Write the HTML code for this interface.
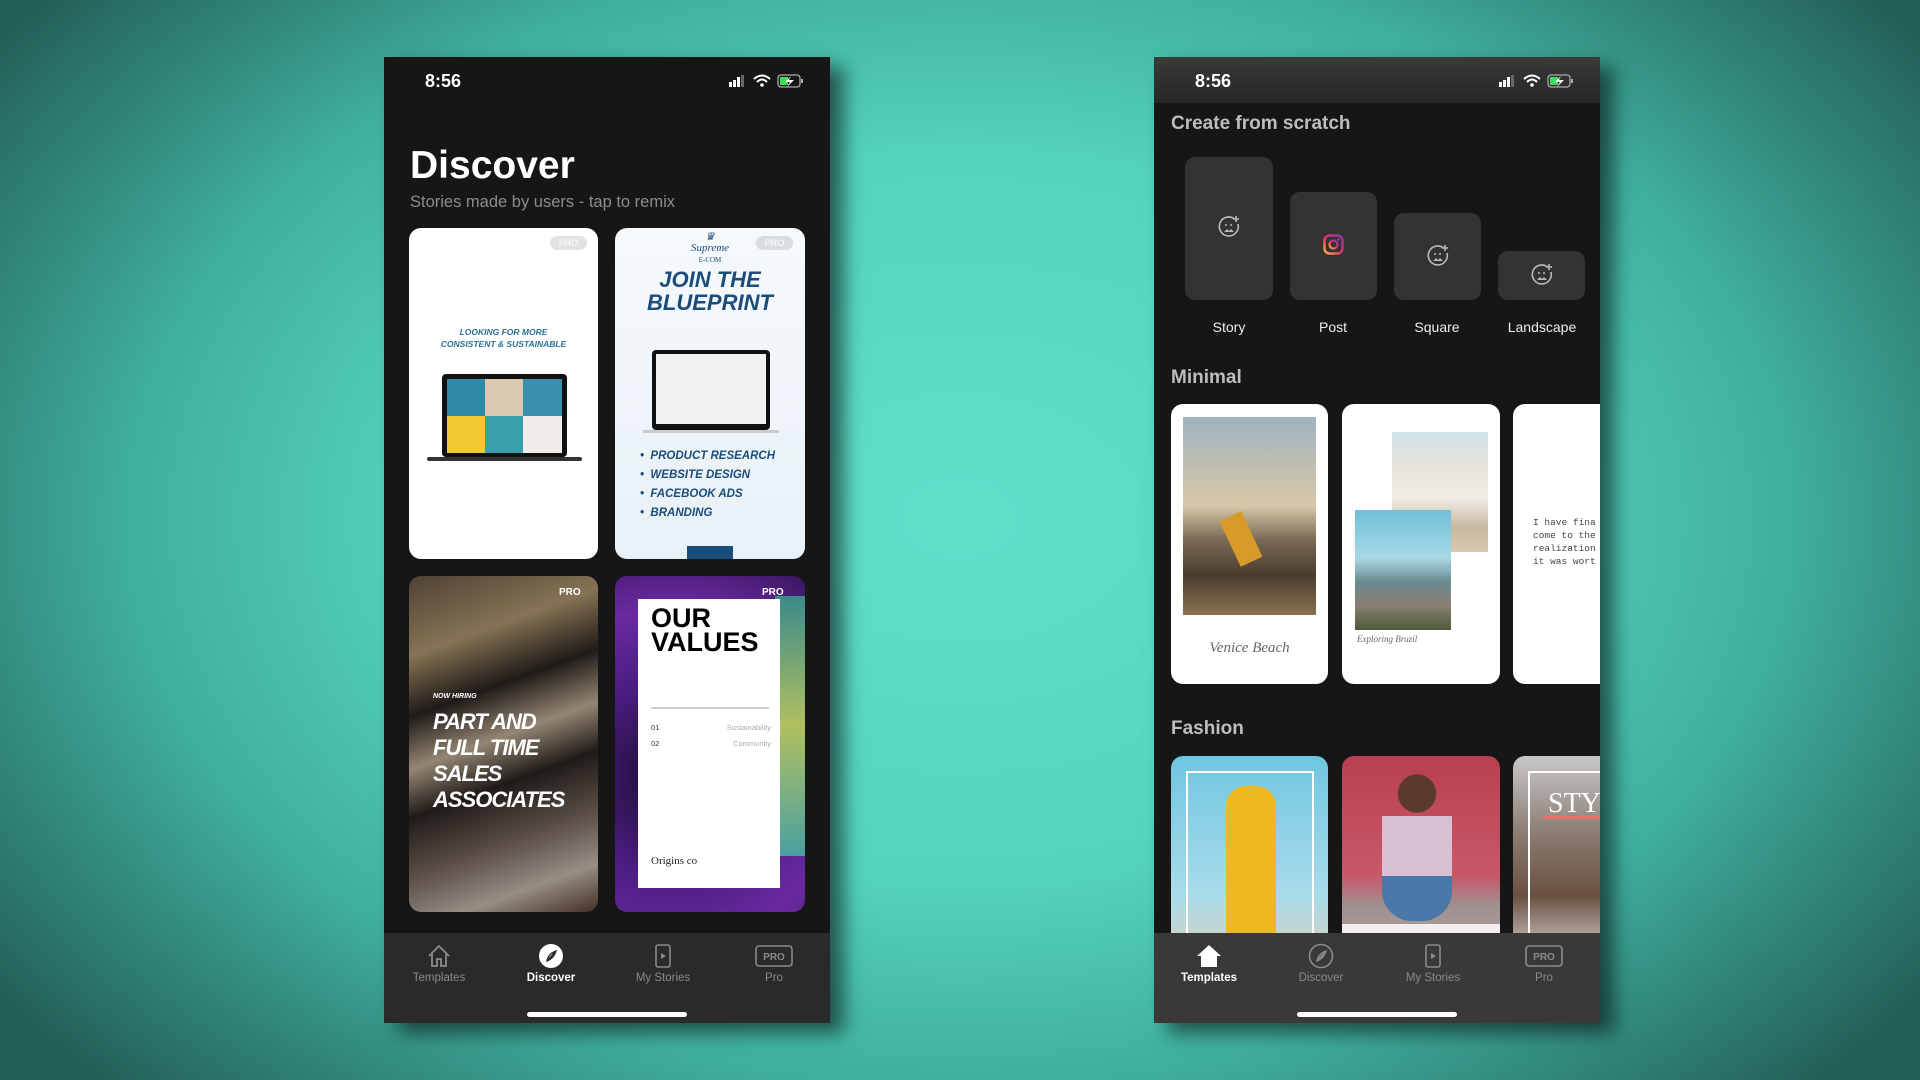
<!DOCTYPE html>
<html><head><meta charset="utf-8">
<style>
*{margin:0;padding:0;box-sizing:border-box}
body{width:1920px;height:1080px;overflow:hidden;position:relative;font-family:"Liberation Sans",sans-serif;
background:radial-gradient(ellipse 62% 75% at 50% 48%,#5fe0cb 0%,#54d3bd 45%,#3fae9c 70%,#235f57 100%);}
.ph{position:absolute;top:57px;width:446px;height:966px;background:#161616;overflow:hidden;box-shadow:14px 10px 18px rgba(0,0,0,.55)}
.abs{position:absolute}
.time{position:absolute;left:41px;top:14px;font-size:18px;font-weight:bold;color:#fff}
.card{position:absolute;border-radius:12px;overflow:hidden}
.tabbar{position:absolute;left:0;top:876px;width:446px;height:90px}
.tab{position:absolute;top:0;width:100px;margin-left:-50px;text-align:center;font-size:11.5px;color:#8a8a8a}
.tab svg{display:block;margin:10px auto 3px}
.hi{position:absolute;top:955px;left:143px;width:160px;height:5px;border-radius:3px;background:#fff}
.bb{font-style:italic;font-weight:900;color:#1a4c7c}
.sec{position:absolute;left:17px;font-size:19px;font-weight:bold;color:#bdbdbd}
.box{position:absolute;background:#333;border-radius:10px}
.lbl{position:absolute;top:262px;width:100px;margin-left:-50px;text-align:center;font-size:14px;color:#eee}
</style></head><body>

<!-- LEFT PHONE -->
<div class="ph" style="left:384px">
  <div class="time">8:56</div>
  <svg class="abs" style="left:343px;top:16px" width="80" height="16" viewBox="0 0 80 16">
    <rect x="2" y="9" width="3" height="5" fill="#fff"/><rect x="6" y="7" width="3" height="7" fill="#fff"/><rect x="10" y="4" width="3" height="10" fill="#fff"/><rect x="14" y="2" width="3" height="12" fill="#666"/>
    <path d="M27 6 Q35 -1 43 6" stroke="#fff" stroke-width="2" fill="none"/><path d="M30 9 Q35 4 40 9" stroke="#fff" stroke-width="2" fill="none"/><circle cx="35" cy="12" r="1.8" fill="#fff"/>
    <rect x="51" y="2" width="22" height="12" rx="3" stroke="#aaa" stroke-width="1.3" fill="none"/><rect x="53" y="4" width="8" height="8" fill="#3ddc5a"/><path d="M64 3 L58 9 L63 9 L60 14 L67 7 L62 7 Z" fill="#fff"/><rect x="74" y="6" width="2" height="4" fill="#aaa"/>
  </svg>
  <div class="abs" style="left:26px;top:87px;font-size:39px;font-weight:bold;color:#fff">Discover</div>
  <div class="abs" style="left:26px;top:136px;font-size:16.5px;color:#8c8c8c">Stories made by users - tap to remix</div>

  <!-- card1 -->
  <div class="card" style="left:25px;top:171px;width:189px;height:331px;background:#fff">
    <div class="abs" style="left:141px;top:8px;width:37px;height:14px;border-radius:7px;background:#e2e2e2;color:#fff;font-size:9px;text-align:center;line-height:14px">PRO</div>
    <div class="abs bb" style="left:0;width:189px;top:98px;text-align:center;font-size:8.5px;line-height:12px;color:#2a7196">LOOKING FOR MORE<br>CONSISTENT &amp; SUSTAINABLE</div>
    <div class="abs" style="left:33px;top:146px;width:125px;height:83px;background:#111;border-radius:4px"></div>
    <div class="abs" style="left:38px;top:151px;width:115px;height:74px;background:linear-gradient(90deg,#2e8aa8 0 33%,#d8c9b0 33% 66%,#3a8fae 66%)"></div>
    <div class="abs" style="left:38px;top:188px;width:115px;height:37px;background:linear-gradient(90deg,#f0c830 0 33%,#38a0a8 33% 66%,#f0ece8 66%)"></div>
    <div class="abs" style="left:18px;top:229px;width:155px;height:4px;background:#333;border-radius:2px"></div>
  </div>
  <!-- card2 -->
  <div class="card" style="left:231px;top:171px;width:190px;height:331px;background:linear-gradient(#f6f9fc,#e8f1f7)">
    <div class="abs" style="left:141px;top:8px;width:37px;height:14px;border-radius:7px;background:#d8dde0;color:#fff;font-size:9px;text-align:center;line-height:14px">PRO</div>
    <div class="abs" style="left:0;width:190px;top:4px;text-align:center;font-family:'Liberation Serif',serif;font-style:italic;font-size:11px;color:#1a4c7c;line-height:11px">♛<br>Supreme<br><span style="font-size:7px;font-style:normal">E-COM</span></div>
    <div class="abs bb" style="left:0;width:190px;top:40px;text-align:center;font-size:22px;line-height:23px">JOIN THE<br>BLUEPRINT</div>
    <div class="abs" style="left:37px;top:122px;width:118px;height:80px;background:#111;border-radius:4px"></div>
    <div class="abs" style="left:41px;top:126px;width:110px;height:70px;background:#f2f2f2"></div>
    <div class="abs" style="left:28px;top:202px;width:136px;height:3px;background:#ccc"></div>
    <div class="abs bb" style="left:25px;top:219px;font-size:11.5px;line-height:19px">• &nbsp;PRODUCT RESEARCH<br>• &nbsp;WEBSITE DESIGN<br>• &nbsp;FACEBOOK ADS<br>• &nbsp;BRANDING</div>
    <div class="abs" style="left:72px;top:318px;width:46px;height:13px;background:#1a4c7c"></div>
  </div>
  <!-- card3 -->
  <div class="card" style="left:25px;top:519px;width:189px;height:336px;background:linear-gradient(160deg,#6a5848 0%,#b39a70 20%,#2a2420 35%,#c6b39a 48%,#2b2420 60%,#7a6a60 75%,#c9bdb0 88%,#5a4030 100%)">
    <div class="abs" style="inset:0;background:rgba(0,0,0,.25)"></div>
    <div class="abs" style="left:150px;top:11px;color:#fff;font-size:10px;font-weight:bold">PRO</div>
    <div class="abs" style="left:24px;top:117px;color:#fff;font-size:7px;font-weight:bold;font-style:italic">NOW HIRING</div>
    <div class="abs" style="left:24px;top:133px;color:#fff;font-size:22px;font-weight:900;font-style:italic;line-height:26px;letter-spacing:-1px">PART AND<br>FULL TIME<br>SALES<br>ASSOCIATES</div>
  </div>
  <!-- card4 -->
  <div class="card" style="left:231px;top:519px;width:190px;height:336px;background:radial-gradient(circle at 30% 60%,#1a0a2a,#4a1d80 40%,#6a2aa0 70%,#3a1660)">
    <div class="abs" style="right:0;top:20px;width:30px;height:260px;background:linear-gradient(#3a8a8a,#b0c060,#4aa0a0)"></div>
    <div class="abs" style="left:23px;top:23px;width:142px;height:289px;background:#fff"></div>
    <div class="abs" style="left:147px;top:11px;color:#fff;font-size:10px;font-weight:bold">PRO</div>
    <div class="abs" style="left:36px;top:30px;color:#000;font-size:27px;font-weight:bold;line-height:24px">OUR<br>VALUES</div>
    <div class="abs" style="left:36px;top:131px;width:118px;height:2px;background:#ccc"></div>
    <div class="abs" style="left:36px;top:144px;width:120px;font-size:7.5px;color:#333;line-height:16px">01<span style="float:right;color:#aaa">Sustainability</span><br>02<span style="float:right;color:#aaa">Community</span></div>
    <div class="abs" style="left:36px;top:279px;font-family:'Liberation Serif',serif;font-size:11px;color:#222">Origins co</div>
  </div>

  <div class="tabbar" style="background:#2a2a2a">
    <div class="tab" style="left:55px"><svg width="26" height="26" viewBox="0 0 26 26"><path d="M3 13 L13 3 L23 13 M6 10 V23 H11 V16 H15 V23 H20 V10" stroke="#8a8a8a" stroke-width="1.8" fill="none"/></svg>Templates</div>
    <div class="tab" style="left:167px;color:#fff;font-weight:bold"><svg width="26" height="26" viewBox="0 0 26 26"><circle cx="13" cy="13" r="12" fill="#fff"/><path d="M18 8 Q16 15 9 18 Q10 11 18 8Z M9 18 L18 8" stroke="#2a2a2a" stroke-width="1.4" fill="none"/></svg>Discover</div>
    <div class="tab" style="left:279px"><svg width="26" height="26" viewBox="0 0 26 26"><rect x="6" y="2" width="14" height="22" rx="2" stroke="#8a8a8a" stroke-width="1.6" fill="none"/><path d="M11 10 L16 13 L11 16Z" fill="#8a8a8a"/></svg>My Stories</div>
    <div class="tab" style="left:390px"><svg width="40" height="26" viewBox="0 0 40 26"><rect x="2" y="3" width="36" height="20" rx="3" stroke="#8a8a8a" stroke-width="1.6" fill="none"/><text x="20" y="17" text-anchor="middle" font-size="10" font-weight="bold" fill="#8a8a8a" font-family="Liberation Sans">PRO</text></svg>Pro</div>
  </div>
  <div class="hi"></div>
</div>

<!-- RIGHT PHONE -->
<div class="ph" style="left:1154px">
  <div class="abs" style="left:0;top:0;width:446px;height:46px;background:linear-gradient(#3a3a3a,#262626)"></div>
  <div class="time">8:56</div>
  <svg class="abs" style="left:343px;top:16px" width="80" height="16" viewBox="0 0 80 16">
    <rect x="2" y="9" width="3" height="5" fill="#fff"/><rect x="6" y="7" width="3" height="7" fill="#fff"/><rect x="10" y="4" width="3" height="10" fill="#fff"/><rect x="14" y="2" width="3" height="12" fill="#666"/>
    <path d="M27 6 Q35 -1 43 6" stroke="#fff" stroke-width="2" fill="none"/><path d="M30 9 Q35 4 40 9" stroke="#fff" stroke-width="2" fill="none"/><circle cx="35" cy="12" r="1.8" fill="#fff"/>
    <rect x="51" y="2" width="22" height="12" rx="3" stroke="#aaa" stroke-width="1.3" fill="none"/><rect x="53" y="4" width="8" height="8" fill="#3ddc5a"/><path d="M64 3 L58 9 L63 9 L60 14 L67 7 L62 7 Z" fill="#fff"/><rect x="74" y="6" width="2" height="4" fill="#aaa"/>
  </svg>
  <div class="sec" style="top:56px">Create from scratch</div>
  <div class="box" style="left:31px;top:100px;width:88px;height:143px"></div>
  <div class="box" style="left:136px;top:135px;width:87px;height:108px"></div>
  <div class="box" style="left:240px;top:156px;width:87px;height:87px"></div>
  <div class="box" style="left:344px;top:194px;width:87px;height:49px"></div>
  <svg class="abs" style="left:63px;top:158px" width="24" height="24" viewBox="0 0 24 24"><path d="M17 3.5 A9.5 9.5 0 1 0 21 9" stroke="#bbb" stroke-width="1.6" fill="none"/><path d="M19 1 V7 M16 4 H22" stroke="#bbb" stroke-width="1.6"/><circle cx="9" cy="10" r="1" fill="#bbb"/><circle cx="14" cy="10" r="1" fill="#bbb"/><path d="M7 17 L10 14 L12 16 L14 14 L17 17Z" fill="#bbb"/></svg>
  <svg class="abs" style="left:169px;top:177px" width="21" height="21" viewBox="0 0 21 21"><defs><linearGradient id="ig" x1="0" y1="1" x2="1" y2="0"><stop offset="0" stop-color="#fdb045"/><stop offset=".5" stop-color="#e1306c"/><stop offset="1" stop-color="#833ab4"/></linearGradient></defs><rect x="1.5" y="1.5" width="18" height="18" rx="5" stroke="url(#ig)" stroke-width="2.4" fill="none"/><circle cx="10.5" cy="10.5" r="4" stroke="url(#ig)" stroke-width="2.2" fill="none"/><circle cx="15.5" cy="5.5" r="1.2" fill="#e1306c"/></svg>
  <svg class="abs" style="left:272px;top:187px" width="24" height="24" viewBox="0 0 24 24"><path d="M17 3.5 A9.5 9.5 0 1 0 21 9" stroke="#bbb" stroke-width="1.6" fill="none"/><path d="M19 1 V7 M16 4 H22" stroke="#bbb" stroke-width="1.6"/><circle cx="9" cy="10" r="1" fill="#bbb"/><circle cx="14" cy="10" r="1" fill="#bbb"/><path d="M7 17 L10 14 L12 16 L14 14 L17 17Z" fill="#bbb"/></svg>
  <svg class="abs" style="left:376px;top:206px" width="24" height="24" viewBox="0 0 24 24"><path d="M17 3.5 A9.5 9.5 0 1 0 21 9" stroke="#bbb" stroke-width="1.6" fill="none"/><path d="M19 1 V7 M16 4 H22" stroke="#bbb" stroke-width="1.6"/><circle cx="9" cy="10" r="1" fill="#bbb"/><circle cx="14" cy="10" r="1" fill="#bbb"/><path d="M7 17 L10 14 L12 16 L14 14 L17 17Z" fill="#bbb"/></svg>
  <div class="lbl" style="left:75px">Story</div>
  <div class="lbl" style="left:179px">Post</div>
  <div class="lbl" style="left:283px">Square</div>
  <div class="lbl" style="left:388px">Landscape</div>

  <div class="sec" style="top:310px">Minimal</div>
  <div class="card" style="left:17px;top:347px;width:157px;height:280px;background:#fff">
    <div class="abs" style="left:12px;top:13px;width:133px;height:198px;background:linear-gradient(#9fb3c0 0%,#d7c8a8 45%,#7a6a55 62%,#4a3d30 80%,#8a7250 100%)"></div>
    <div class="abs" style="left:58px;top:110px;width:24px;height:50px;background:#d89b2a;transform:rotate(-25deg)"></div>
    <div class="abs" style="left:0;width:157px;top:236px;text-align:center;font-family:'Liberation Serif',serif;font-style:italic;font-size:15px;color:#666">Venice Beach</div>
  </div>
  <div class="card" style="left:188px;top:347px;width:158px;height:280px;background:#fff">
    <div class="abs" style="left:50px;top:28px;width:96px;height:120px;background:linear-gradient(#cfe3ea 0%,#e8e2d8 30%,#f0ece4 55%,#c8b9a0 80%,#d8c8b0)"></div>
    <div class="abs" style="left:13px;top:106px;width:96px;height:120px;background:linear-gradient(#6fc0d8 0%,#a8d8e6 40%,#6a8a90 60%,#8a8070 80%,#4a5a3a)"></div>
    <div class="abs" style="left:15px;top:230px;font-family:'Liberation Serif',serif;font-style:italic;font-size:9px;color:#666">Exploring Brazil</div>
  </div>
  <div class="card" style="left:359px;top:347px;width:120px;height:280px;background:#fff">
    <div class="abs" style="left:20px;top:112px;font-family:'Liberation Mono',monospace;font-size:9.5px;line-height:13px;color:#444;white-space:nowrap">I have fina<br>come to the<br>realization<br>it was wort</div>
  </div>

  <div class="sec" style="top:661px">Fashion</div>
  <div class="card" style="left:17px;top:699px;width:157px;height:200px;background:linear-gradient(#6fc6e0,#a8dcea 70%,#d8d0c0)">
    <div class="abs" style="left:15px;top:15px;width:128px;height:190px;border:2px solid #fff"></div>
    <div class="abs" style="left:55px;top:30px;width:50px;height:170px;background:#f0b820;border-radius:20px 20px 4px 4px"></div>
  </div>
  <div class="card" style="left:188px;top:699px;width:158px;height:200px;background:linear-gradient(#b84050,#c85868 60%,#a09090 75%,#b0a8a0)">
    <div class="abs" style="left:40px;top:15px;width:70px;height:150px;background:radial-gradient(circle at 50% 15%,#5a3a2a 0 14%,transparent 15%),linear-gradient(transparent 30%,#d8c0d0 30% 70%,#4a78a8 70%);border-radius:30px"></div>
    <div class="abs" style="left:0;top:168px;width:158px;height:32px;background:#f5eef0"></div>
  </div>
  <div class="card" style="left:359px;top:699px;width:120px;height:200px;background:linear-gradient(#c8c8c8,#8a7a70 40%,#6a5040 70%,#d8d0d0)">
    <div class="abs" style="left:15px;top:15px;width:110px;height:190px;border:2px solid #fff"></div>
    <div class="abs" style="left:35px;top:32px;font-family:'Liberation Serif',serif;font-size:28px;color:#fff">STY</div>
    <div class="abs" style="left:30px;top:60px;width:90px;height:3px;background:#f07070"></div>
  </div>

  <div class="tabbar" style="background:#3a3937">
    <div class="tab" style="left:55px;color:#fff;font-weight:bold"><svg width="26" height="26" viewBox="0 0 26 26"><path d="M1 13 L13 2 L25 13 H21 V24 H5 V13Z" fill="#fff"/></svg>Templates</div>
    <div class="tab" style="left:167px"><svg width="26" height="26" viewBox="0 0 26 26"><circle cx="13" cy="13" r="11.5" stroke="#8a8a8a" stroke-width="1.6" fill="none"/><path d="M18 8 Q16 15 9 18 Q10 11 18 8Z M9 18 L18 8" stroke="#8a8a8a" stroke-width="1.4" fill="none"/></svg>Discover</div>
    <div class="tab" style="left:279px"><svg width="26" height="26" viewBox="0 0 26 26"><rect x="6" y="2" width="14" height="22" rx="2" stroke="#8a8a8a" stroke-width="1.6" fill="none"/><path d="M11 10 L16 13 L11 16Z" fill="#8a8a8a"/></svg>My Stories</div>
    <div class="tab" style="left:390px"><svg width="40" height="26" viewBox="0 0 40 26"><rect x="2" y="3" width="36" height="20" rx="3" stroke="#8a8a8a" stroke-width="1.6" fill="none"/><text x="20" y="17" text-anchor="middle" font-size="10" font-weight="bold" fill="#8a8a8a" font-family="Liberation Sans">PRO</text></svg>Pro</div>
  </div>
  <div class="hi"></div>
</div>
</body></html>
